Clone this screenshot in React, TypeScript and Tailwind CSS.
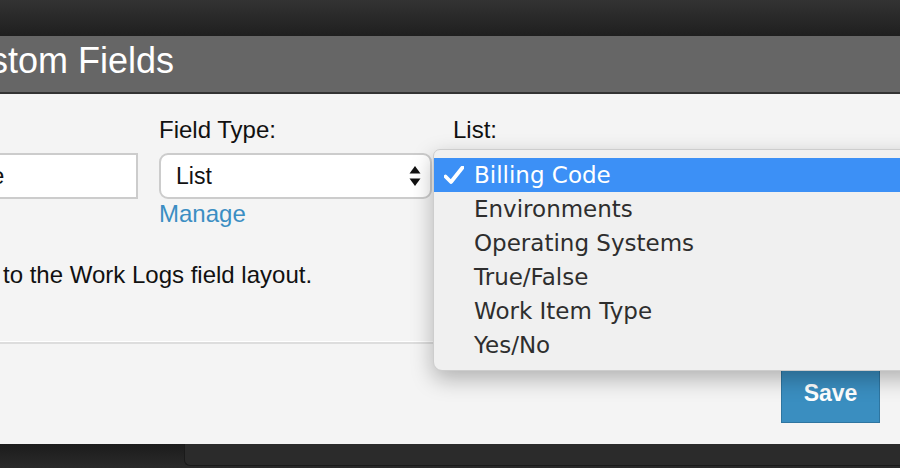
const options = [
  "Billing Code",
  "Environments",
  "Operating Systems",
  "True/False",
  "Work Item Type",
  "Yes/No",
];

function SelectArrows() {
  return (
    <svg width="12" height="20" viewBox="0 0 12 20" className="shrink-0">
      <path d="M6 0 L11.5 7.5 L0.5 7.5 Z" fill="#111" />
      <path d="M6 20 L11.5 12.5 L0.5 12.5 Z" fill="#111" />
    </svg>
  );
}

function Check() {
  return (
    <svg width="20" height="18" viewBox="0 0 20 18">
      <path
        d="M1.5 10.5 L7 16 L18.5 1.5"
        fill="none"
        stroke="#fff"
        strokeWidth="3.8"
        strokeLinecap="round"
        strokeLinejoin="round"
      />
    </svg>
  );
}

function ListPopup() {
  return (
    <div className="absolute left-[433px] top-[55px] w-[490px] rounded-tl-[7px] rounded-bl-[9px] bg-[#f0f0f0] border border-[#cdcdcd] py-[8px] shadow-[0_8px_22px_rgba(0,0,0,0.28)] font-['DejaVu_Sans',sans-serif] text-[23px] leading-[34px] text-[#2e2e2e]">
      {options.map((o, i) =>
        i === 0 ? (
          <div key={o} className="flex h-[34px] items-center bg-[#3c90f6] text-white">
            <span className="ml-[10px] mr-[10px] flex w-[20px] justify-center">
              <Check />
            </span>
            <span>{o}</span>
          </div>
        ) : (
          <div key={o} className="h-[34px] pl-[40px]">
            {o}
          </div>
        )
      )}
    </div>
  );
}

export default function App() {
  return (
    <div className="flex h-[468px] w-[900px] flex-col overflow-hidden bg-[#262626] font-['Liberation_Sans',Arial,sans-serif]">
      <div className="h-[36px] shrink-0 bg-gradient-to-b from-[#333333] to-[#1f1f1f]" />

      <div className="h-[58px] shrink-0 border-b-2 border-[#333] bg-[#666666] overflow-hidden">
        <h1 className="-ml-[56px] whitespace-nowrap text-[36px] leading-[49px] text-white">
          Custom Fields
        </h1>
      </div>

      <div className="relative flex flex-1 flex-col bg-[#f4f4f4] pt-[22px] text-[24px] text-[#111]">
        <div className="flex">
          <div className="flex w-[138px] flex-col">
            <div className="mb-[9px] h-[28px]" />
            <div className="flex h-[46px] items-center overflow-hidden border-2 border-l-0 border-[#cccccc] bg-white">
              <span className="-ml-[57px] whitespace-nowrap text-[23px]">Name</span>
            </div>
          </div>

          <div className="ml-[21px] flex w-[273px] flex-col">
            <label className="mb-[9px] leading-[28px]">Field Type:</label>
            <div className="flex h-[46px] items-center justify-between rounded-[9px] border-2 border-[#cccccc] bg-white pl-[15px] pr-[9px] text-[23px]">
              <span>List</span>
              <SelectArrows />
            </div>
            <a className="mt-[1px] leading-[28px] text-[#3b8ec3]">Manage</a>
          </div>

          <div className="ml-[21px] flex flex-col">
            <label className="mb-[9px] leading-[28px]">List:</label>
            <div className="h-[46px] w-[300px] rounded-[9px] border-2 border-[#cccccc] bg-white" />
          </div>
        </div>

        <p className="mt-[33px] pl-[3px] leading-[28px]">to the Work Logs field layout.</p>

        <div className="mt-[52px] h-[3px] border-t border-white bg-[#dddddd]" />

        <div className="mt-[19px] flex justify-end pr-[20px]">
          <button className="h-[60px] w-[99px] border border-[#2e75a0] bg-[#3a8ec0] text-[23px] font-bold text-white">
            Save
          </button>
        </div>

        <ListPopup />
      </div>

      <div className="flex h-[24px] shrink-0 bg-gradient-to-b from-[#1c1c1c] to-[#2a2a2a]">
        <div className="ml-[184px] h-[22px] flex-1 rounded-bl-[6px] border-b border-l border-[#1a1a1a] bg-[#2b2b2b]" />
      </div>
    </div>
  );
}
